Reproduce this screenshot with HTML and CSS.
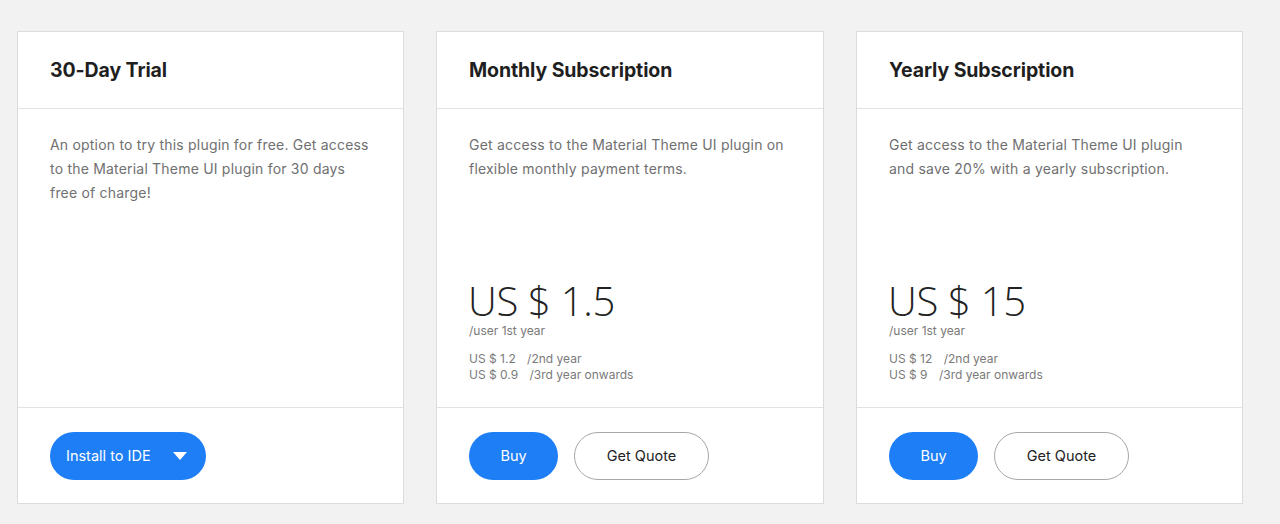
FILE: index.html
```html
<!DOCTYPE html>
<html lang="en">
<head>
<meta charset="utf-8">
<title>Pricing</title>
<link rel="stylesheet" href="styles.css">
</head>
<body>
<div class="plans">
  <div class="card">
    <div class="card-head"><h2>30-Day Trial</h2></div>
    <div class="card-body">
      <p class="desc">An option to try this plugin for free. Get access to the Material Theme UI plugin for 30 days free of charge!</p>
    </div>
    <div class="card-foot">
      <button class="btn btn-primary btn-install">Install to IDE
        <svg class="caret" width="14" height="8" viewBox="0 0 14 8"><path d="M0 0H14L7 8Z" fill="#fff"/></svg>
      </button>
    </div>
  </div>
  <div class="card">
    <div class="card-head"><h2>Monthly Subscription</h2></div>
    <div class="card-body">
      <p class="desc">Get access to the Material Theme UI plugin on flexible monthly payment terms.</p>
      <div class="price">
        <div class="amount">US $ 1.5</div>
        <div class="per">/user 1st year</div>
        <div class="later">
          <div>US $ 1.2 <span class="sp">/2nd year</span></div>
          <div>US $ 0.9 <span class="sp">/3rd year onwards</span></div>
        </div>
      </div>
    </div>
    <div class="card-foot">
      <button class="btn btn-primary btn-buy">Buy</button>
      <button class="btn btn-outline">Get Quote</button>
    </div>
  </div>
  <div class="card">
    <div class="card-head"><h2>Yearly Subscription</h2></div>
    <div class="card-body">
      <p class="desc">Get access to the Material Theme UI plugin and save 20% with a yearly subscription.</p>
      <div class="price">
        <div class="amount">US $ 15</div>
        <div class="per">/user 1st year</div>
        <div class="later">
          <div>US $ 12 <span class="sp">/2nd year</span></div>
          <div>US $ 9 <span class="sp">/3rd year onwards</span></div>
        </div>
      </div>
    </div>
    <div class="card-foot">
      <button class="btn btn-primary btn-buy">Buy</button>
      <button class="btn btn-outline">Get Quote</button>
    </div>
  </div>
</div>
</body>
</html>
```
FILE: styles.css
```css
* { box-sizing: border-box; }
html, body { margin: 0; padding: 0; }
body {
  background: #f2f2f2;
  font-family: Inter, "Noto Sans", "Liberation Sans", sans-serif;
  width: 1280px;
  height: 524px;
  overflow: hidden;
}
.plans {
  display: grid;
  grid-template-columns: 387px 388px 387px;
  column-gap: 32px;
  padding: 31px 0 0 17px;
}
.card {
  background: #fff;
  border: 1px solid #dcdcdc;
  height: 473px;
  display: flex;
  flex-direction: column;
}
.card-head {
  height: 77px;
  border-bottom: 1px solid #e2e2e2;
  padding: 0 32px;
  display: flex;
  align-items: center;
}
.card-head h2 {
  margin: 0;
  font-size: 19.5px;
  font-weight: 700;
  color: #1f1f1f;
  letter-spacing: -0.1px;
}
.card-body {
  flex: 1;
  padding: 24px 32px 24px;
  display: flex;
  flex-direction: column;
}
.desc {
  margin: 0;
  font-size: 14px;
  letter-spacing: 0.2px;
  line-height: 24px;
  color: #707070;
}
.price {
  margin-top: auto;
}
.amount {
  font-family: "Open Sans", Inter, sans-serif;
  font-weight: 300;
  font-size: 40px;
  line-height: 46px;
  color: #222;
  letter-spacing: -0.3px;
  margin-left: -1px;
}
.per {
  font-size: 12px;
  line-height: 14px;
  color: #7a7a7a;
  margin-top: 0;
}
.later {
  margin-top: 13px;
  font-size: 12px;
  line-height: 16px;
  color: #7a7a7a;
}
.sp { margin-left: 8px; }
.card-foot {
  height: 96px;
  border-top: 1px solid #e2e2e2;
  padding: 0 32px;
  display: flex;
  align-items: center;
  gap: 16px;
}
.btn {
  height: 48px;
  border-radius: 24px;
  font-family: Inter, "Noto Sans", sans-serif;
  font-size: 14.5px;
  cursor: pointer;
  display: inline-flex;
  align-items: center;
  justify-content: center;
}
.btn-primary {
  background: #1d7ef5;
  border: none;
  color: #fff;
}
.btn-install {
  width: 156px;
  justify-content: flex-start;
  padding: 0 0 0 16px;
}
.caret { margin-left: 22px; }
.btn-buy { width: 89px; }
.btn-outline {
  width: 135px;
  background: #fff;
  border: 1px solid #a8a8a8;
  color: #222;
}
```
